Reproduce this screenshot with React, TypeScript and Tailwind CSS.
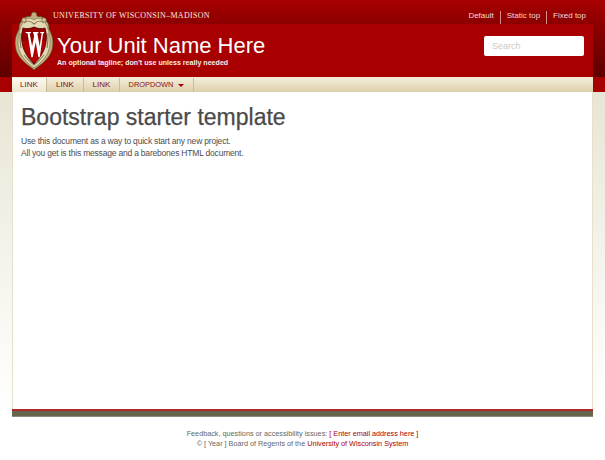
const Crest = () => (
  <svg width="38" height="60" viewBox="0 0 38 60" className="shrink-0">
    <path d="M19 1c2 0 3 2 3 4 2 1 3 0 5 1 3 1 4 3 5 5 2 2 2 4 2 7 2 4 4 8 4 13 0 9-3 14-8 19-4 4-8 6-11 9-3-3-7-5-11-9C3 45 0 40 0 31c0-5 2-9 4-13 0-3 0-5 2-7 1-2 2-4 5-5 2-1 3 0 5-1 0-2 1-4 3-4z" fill="#bfae80" stroke="#55451f" strokeWidth="0.7" />
    <path d="M19 9c4-3 9-2 11 2 3 6 5 12 5 20 0 10-5 18-16 26C8 49 3 41 3 31c0-8 2-14 5-20 2-4 7-5 11-2z" fill="#e4d9b6" stroke="#7d6c44" strokeWidth="0.6" />
    <circle cx="9" cy="9" r="2.200" fill="#d8cba2" stroke="#6b5a34" strokeWidth="0.7" />
    <circle cx="29" cy="9" r="2.200" fill="#d8cba2" stroke="#6b5a34" strokeWidth="0.7" />
    <path d="M9 12c3-3 7-2 10 1 3-3 7-4 10-1M5 22c0 5 0 10 1 15M33 22c0 5 0 10-1 15M9 44c3 4 6 7 10 10 4-3 7-6 10-10" fill="none" stroke="#8f7d52" strokeWidth="1.1" />
    <path d="M19 16c4 2 8 2 11 1 1 4 2 9 1 14-1 8-5 15-12 22-7-7-11-14-12-22-1-5 0-10 1-14 3 1 7 1 11-1z" fill="#b30000" stroke="#4f0808" strokeWidth="0.9" />
    <path d="M19 16c4 2 8 2 11 1 1 4 2 8 1 13H7c-1-5 0-9 1-13 3 1 7 1 11-1z" fill="#6a0000" opacity="0.4" />
    <path d="M10 21h6v1.200h-1.400l2.500 13 2-10-.6-3H18V21h5.500v1.200h-1.200l2.400 13 2-13h-1.400V21h3.800v1.200h-1l-3.300 24h-1.400l-2.700-15-3 15h-1.400l-3.700-24h-1z" fill="#ffffff" />
  </svg>
);

const NavLink = ({ label, w, active }: { label: string; w: string; active?: boolean }) => (
  <a className={`flex items-center justify-center ${w} text-[8px] text-[#8b0f0f] border-r border-[#c9bc98] ${active ? "bg-[linear-gradient(#fbf9f1,#eee6d0)]" : ""}`}>
    {label}
  </a>
);

export default function App() {
  return (
    <div className="w-[605px] h-[460px] bg-white overflow-hidden font-['Liberation_Sans',Arial,sans-serif]">
      <div className="h-[417px] px-3 flex flex-col bg-[linear-gradient(#a80000_0px,#8c0000_24px,#5f0000_77px,#a80000_77px,#a80000_92px,#e9e5d5_92px,#ffffff_410px)]">
        <div className="h-6 -mx-3 px-3 flex justify-between shrink-0">
          <div className="pl-[41px] pt-[11px] text-[8px] leading-[10px] tracking-[0.3px] text-[#f7e9dd] font-['Liberation_Serif',serif]">
            UNIVERSITY OF WISCONSIN–MADISON
          </div>
          <div className="pr-[7px] pt-[11px] flex text-[8px] leading-[10px] text-[#f2d9d0]">
            <span className="pr-[6px] border-r border-[#d98f86]">Default</span>
            <span className="px-[6px] border-r border-[#d98f86]">Static top</span>
            <span className="pl-[6px]">Fixed top</span>
          </div>
        </div>

        <div className="h-[53px] bg-[#a80000] flex items-start justify-between shrink-0">
          <div className="flex">
            <div className="-mt-[13px] ml-[3px]"><Crest /></div>
            <div className="ml-[4px]">
              <div className="text-[22px] leading-[26px] pt-[9px] box-content text-white">Your Unit Name Here</div>
              <div className="text-[7.1px] leading-[9px] font-bold text-[#f8ecec]">An optional tagline; don't use unless really needed</div>
            </div>
          </div>
          <input
            placeholder="Search"
            className="w-[100px] h-5 mt-3 mr-[9px] px-2 rounded-[2px] bg-white text-[9px] outline-none placeholder:text-[#c9c9c9]"
          />
        </div>

        <div className="h-[15px] flex shrink-0 border-t border-[#efe6d0] bg-[linear-gradient(#f3ecd9,#dccfaa)]">
          <NavLink label="LINK" w="w-[35px]" active />
          <NavLink label="LINK" w="w-[37px]" />
          <NavLink label="LINK" w="w-[36px]" />
          <a className="flex items-center justify-center gap-[5px] w-[74px] text-[7.4px] text-[#8b0f0f] border-r border-[#c9bc98]">
            DROPDOWN
            <span className="border-x-[3px] border-t-[3px] border-x-transparent border-t-[#a80000]" />
          </a>
        </div>

        <div className="flex-1 bg-white border-x border-[#e6e1cd] px-2 pt-[12px] text-[#4d4d4d]">
          <h1 className="text-[23px] leading-[26px] font-normal text-[#4a4a4a] [-webkit-text-stroke:0.25px_#4a4a4a]">Bootstrap starter template</h1>
          <p className="mt-[5px] text-[8.5px] tracking-[-0.2px] leading-[12px]">
            Use this document as a way to quick start any new project.
            <br />
            All you get is this message and a barebones HTML document.
          </p>
        </div>

        <div className="h-2 shrink-0 bg-[#66664f] border-t-2 border-t-[#b02a2a] border-b border-b-[#8b8b76]" />
      </div>

      <div className="pt-[12px] text-center text-[7.25px] leading-[10px] text-[#666666]">
        <div>Feedback, questions or accessibility issues: <span className="text-[#a80000]">[ Enter email address here ]</span></div>
        <div>© [ Year ] Board of Regents of the <span className="text-[#a80000]">University of Wisconsin System</span></div>
      </div>
    </div>
  );
}
